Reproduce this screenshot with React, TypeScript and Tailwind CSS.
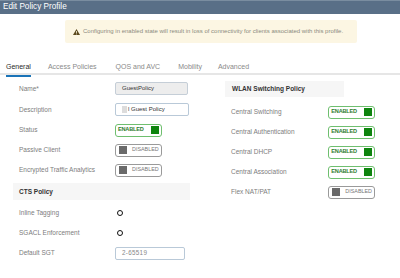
import React from "react";

const font = { fontFamily: '"Liberation Sans", Arial, sans-serif' };

function Toggle({ on }: { on: boolean }) {
  if (on) {
    return (
      <div className="flex h-[13px] w-[47px] items-center justify-between rounded-[3px] border border-[#6fbf6f] pl-[2px] pr-[2px]">
        <span className="text-[5.6px] font-bold leading-none tracking-[-0.2px] text-[#2f7d2f]">ENABLED</span>
        <span className="h-[8px] w-[8px] bg-[#0f850f]" />
      </div>
    );
  }
  return (
    <div className="flex h-[13px] w-[47px] items-center gap-[5px] rounded-[3px] border border-[#9a9a9a] pl-[3px] pr-[2px]">
      <span className="h-[8px] w-[8px] bg-[#6a6a6a]" />
      <span className="text-[5.4px] leading-none text-[#777]">DISABLED</span>
    </div>
  );
}

function Row({ label, children, h = "h-[20px]" }: { label: string; children?: React.ReactNode; h?: string }) {
  return (
    <div className={`flex items-center ${h}`}>
      <span className="w-[102px] pl-[6px] text-[6.5px] text-[#7d7d7d]">{label}</span>
      {children}
    </div>
  );
}

function RRow({ label, on }: { label: string; on: boolean }) {
  return (
    <div className="flex h-[20px] items-center">
      <span className="w-[104px] pl-[6px] text-[6.5px] text-[#7d7d7d]">{label}</span>
      <Toggle on={on} />
    </div>
  );
}

function Radio() {
  return <span className="ml-[2px] h-[6px] w-[6px] rounded-full border-[1.5px] border-[#111]" />;
}

export default function App() {
  const tabs = ["General", "Access Policies", "QOS and AVC", "Mobility", "Advanced"];
  const tabX = ["pl-[6px]", "pl-[17px]", "pl-[19px]", "pl-[18px]", "pl-[16px]"];
  return (
    <div className="h-[278px] w-[400px] overflow-hidden bg-white" style={font}>
      <div className="flex h-[14px] items-center border-t border-[#7a8da0] bg-[#596f87] pl-[3px]">
        <span className="text-[8.2px] leading-none text-white">Edit Policy Profile</span>
      </div>

      <div className="ml-[65px] mt-[6px] flex h-[23px] w-[292px] items-center gap-[3px] rounded-[2px] bg-[#fcf6e3] pl-[8px]">
        <svg width="7" height="6" viewBox="0 0 7 6">
          <path d="M3.5 0 L7 6 L0 6 Z" fill="#5c4a1e" />
          <rect x="3.1" y="2" width="0.8" height="2.2" fill="#fcf6e3" />
          <rect x="3.1" y="4.6" width="0.8" height="0.8" fill="#fcf6e3" />
        </svg>
        <span className="text-[6px] text-[#8b8b7e]">
          Configuring in enabled state will result in loss of connectivity for clients associated with this profile.
        </span>
      </div>

      <div className="mt-[17px] flex h-[15px] items-stretch border-b-[2px] border-[#e6e6e6]">
        {tabs.map((t, i) => (
          <div key={t} className={`flex items-start ${tabX[i]}`}>
            <span
              className={`-mb-[2px] flex h-[17px] items-start pt-[3px] text-[7px] leading-none ${
                i === 0 ? "border-b-[2px] border-[#1b74b8] text-[#2b2b2b]" : "text-[#8a8a8a]"
              }`}
            >
              {t}
            </span>
          </div>
        ))}
      </div>

      <div className="flex pt-[3px]">
        <div className="ml-[13px] w-[177px]">
          <Row label="Name*" h="h-[21px]">
            <div className="flex h-[13px] w-[73px] items-center rounded-[2px] border border-[#c5ced7] bg-[#ededed] pl-[6px] text-[6px] text-[#333]">
              GuestPolicy
            </div>
          </Row>
          <Row label="Description" h="h-[21px]">
            <div className="flex h-[13px] w-[74px] items-center gap-[1px] rounded-[2px] border border-[#b9c9d8] bg-white pl-[6px] text-[6px] text-[#333]">
              <span className="h-[7px] w-[5px] bg-[#dcdcdc]" />
              l Guest Policy
            </div>
          </Row>
          <Row label="Status">
            <Toggle on />
          </Row>
          <Row label="Passive Client">
            <Toggle on={false} />
          </Row>
          <Row label="Encrypted Traffic Analytics">
            <Toggle on={false} />
          </Row>

          <div className="mt-[3px] flex h-[17px] items-center bg-[#f6f6f6] pl-[6px]">
            <span className="text-[6.5px] font-bold text-[#333]">CTS Policy</span>
          </div>
          <div className="mt-[3px]">
            <Row label="Inline Tagging">
              <Radio />
            </Row>
            <Row label="SGACL Enforcement">
              <Radio />
            </Row>
            <Row label="Default SGT">
              <div className="flex h-[13px] w-[70px] items-center rounded-[2px] border border-[#b9c9d8] bg-white pl-[6px] text-[6.3px] tracking-[0.3px] text-[#888]">
                2-65519
              </div>
            </Row>
          </div>
        </div>

        <div className="ml-[35px] w-[150px]">
          <div className="mt-[3px] flex h-[16px] w-[119px] items-center bg-[#f6f6f6] pl-[7px]">
            <span className="text-[6.5px] font-bold text-[#333]">WLAN Switching Policy</span>
          </div>
          <div className="mt-[5px]">
            <RRow label="Central Switching" on />
            <RRow label="Central Authentication" on />
            <RRow label="Central DHCP" on />
            <RRow label="Central Association" on />
            <RRow label="Flex NAT/PAT" on={false} />
          </div>
        </div>
      </div>
    </div>
  );
}
